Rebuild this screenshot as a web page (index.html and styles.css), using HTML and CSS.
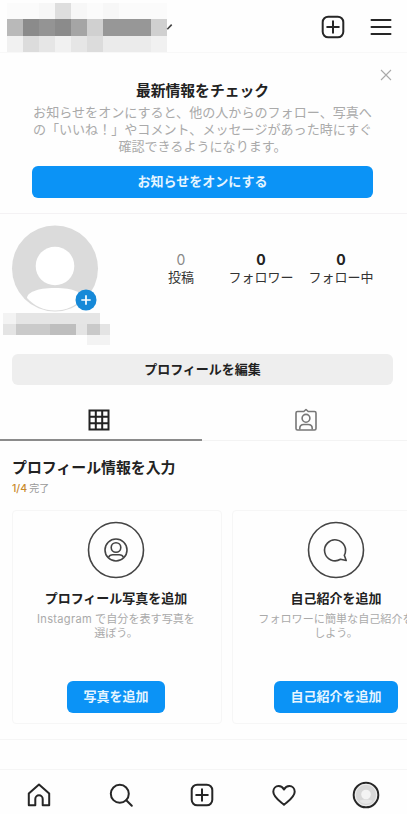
FILE: index.html
```
<!DOCTYPE html>
<html lang="ja">
<head>
<meta charset="utf-8">
<title>プロフィール</title>
<link rel="stylesheet" href="styles.css">
</head>
<body>
<div class="app">
  <header class="topbar">
    <svg class="account" width="180" height="52" viewBox="0 0 180 52">
      <g shape-rendering="crispEdges">
        <path fill="#f7f7f7" d="M39 3h16v16H39zM71 3h16v16H71zM103 3h16v16h-16z"/>
        <path fill="#fbfbfb" d="M7 3h32v16H7zM87 3h16v16H87zM119 3h48v16h-48z"/>
        <path fill="#dedede" d="M55 3h16v16H55z"/>
        <path fill="#b9b9b9" d="M7 19h16v17H7z"/>
        <path fill="#8b8b8b" d="M23 19h16v17H23zM55 19h16v17H55z"/>
        <path fill="#949494" d="M39 19h16v17H39z"/>
        <path fill="#a5a5a5" d="M71 19h16v17H71z"/>
        <path fill="#d0d0d0" d="M87 19h16v17H87zM151 19h16v17h-16z"/>
        <path fill="#979797" d="M103 19h48v17h-48z"/>
        <path fill="#f1f1f1" d="M7 36h16v16H7zM55 36h16v16H55zM151 36h16v16h-16z"/>
        <path fill="#dcdcdc" d="M23 36h16v16H23zM87 36h16v16H87z"/>
        <path fill="#e6e6e6" d="M39 36h16v16H39zM71 36h16v16H71z"/>
        <path fill="#ebebeb" d="M103 36h48v16h-48z"/>
      </g>
      <path d="M167.300 29.200l4.400-4.600" stroke="#444" stroke-width="1.600" fill="none"/>
    </svg>
    <div class="actions">
      <svg width="24" height="24" viewBox="0 0 24 24" class="line"><rect x="1.700" y="1.700" width="20.600" height="20.600" rx="5.500"/><path d="M12 6.200v11.600M6.200 12h11.600"/></svg>
      <svg width="22" height="24" viewBox="0 0 22 24" class="line"><path d="M1.500 5h19M1.500 12h19M1.500 19h19"/></svg>
    </div>
  </header>

  <section class="notice">
    <svg class="close" width="12" height="12" viewBox="0 0 12 12"><path d="M1 1l10 10M11 1L1 11" stroke="#aaa" stroke-width="1.100"/></svg>
    <h2>最新情報をチェック</h2>
    <p>お知らせをオンにすると、他の人からのフォロー、写真へ<br>の「いいね！」やコメント、メッセージがあった時にすぐ<br>確認できるようになります。</p>
    <button class="primary wide">お知らせをオンにする</button>
  </section>

  <section class="profile">
    <div class="person">
      <svg width="112" height="134" viewBox="0 0 112 134">
        <circle cx="55" cy="54.500" r="43" fill="#dbdbdb"/>
        <circle cx="55" cy="52" r="19.300" fill="#fff"/>
        <path d="M27 84c0-5 9-10 28-10s28 5 28 10c-7 8-17 12.500-28 12.500s-21-4.500-28-12.500z" fill="#fff"/>
        <circle cx="86" cy="86" r="10.500" fill="#1689d8"/>
        <path d="M86 81.300v9.400M81.300 86h9.400" stroke="#fff" stroke-width="1.700"/>
        <g shape-rendering="crispEdges">
          <path fill="#e5e5e5" d="M16 99h84v11H16z"/>
          <path fill="#f3f3f3" d="M3 99h13v11H3zM87 121h23v10H87z"/>
          <path fill="#e4e4e4" d="M3 110h13v11H3zM76 110h11v11H76zM100 110h10v11h-10z"/>
          <path fill="#cacaca" d="M16 110h34v11H16z"/>
          <path fill="#bebebe" d="M50 110h26v11H50z"/>
          <path fill="#c9c9c9" d="M87 110h13v11H87z"/>
        </g>
      </svg>
    </div>
    <dl class="stats">
      <div class="muted"><dd>0</dd><dt>投稿</dt></div>
      <div><dd>0</dd><dt>フォロワー</dt></div>
      <div><dd>0</dd><dt>フォロー中</dt></div>
    </dl>
  </section>

  <button class="edit">プロフィールを編集</button>

  <div class="tabs">
    <div class="tab active">
      <svg width="22" height="22" viewBox="0 0 22 22"><path d="M1.500 1.500h19v19h-19zM7.800 1.500v19M14.200 1.500v19M1.500 7.800h19M1.500 14.200h19" fill="none" stroke="#222" stroke-width="2"/></svg>
    </div>
    <div class="tab">
      <svg width="24" height="24" viewBox="0 0 24 24" fill="none" stroke="#777" stroke-width="1.600" stroke-linejoin="round"><path d="M3.500 3.500h6.300L12 1.500l2.200 2h6.300q1.500 0 1.500 1.500v15.500q0 1.500-1.500 1.500h-17Q2 22 2 20.500V5q0-1.500 1.500-1.500z"/><circle cx="12" cy="10.300" r="3.900"/><path d="M5.800 21.500v-1.200c0-2.500 1.800-3.800 4-3.800h4.400c2.200 0 4 1.300 4 3.800v1.200"/></svg>
    </div>
  </div>

  <section class="setup">
    <h2>プロフィール情報を入力</h2>
    <p class="progress"><b>1/4</b>完了</p>
    <div class="cards">
      <article class="card">
        <svg width="58" height="58" viewBox="0 0 58 58" class="badge"><circle cx="29" cy="29" r="27.500"/><circle cx="29" cy="29" r="11"/><circle cx="29" cy="26.500" r="4.800"/><path d="M21.500 36.500c.8-2 2.300-2.800 4.300-2.800h6.400c2 0 3.500.8 4.300 2.800"/></svg>
        <h3>プロフィール写真を追加</h3>
        <p><span class="latin">Instagram</span> で自分を表す写真を<br>選ぼう。</p>
        <button class="primary">写真を追加</button>
      </article>
      <article class="card">
        <svg width="58" height="58" viewBox="0 0 58 58" class="badge"><circle cx="29" cy="29" r="27.500"/><path d="M37.300 34.300A10.500 10.500 0 1 0 33.500 38.300l5.700 1.200z"/></svg>
        <h3>自己紹介を追加</h3>
        <p>フォロワーに簡単な自己紹介を<br>しよう。</p>
        <button class="primary">自己紹介を追加</button>
      </article>
    </div>
  </section>

  <nav class="bottom">
    <svg width="26" height="26" viewBox="0 0 26 26" class="line"><path d="M2.800 23.300V11.500L13 2.500l10.200 9v11.800h-6.500V17a3.700 3.700 0 0 0-7.400 0v6.300z"/></svg>
    <svg width="26" height="26" viewBox="0 0 26 26" class="line"><circle cx="11.800" cy="11.800" r="9"/><path d="M18.300 18.300l5.500 5.500"/></svg>
    <svg width="26" height="26" viewBox="0 0 26 26" class="line"><rect x="2.700" y="2.700" width="20.600" height="20.600" rx="5.500"/><path d="M13 7.200v11.600M7.200 13h11.600"/></svg>
    <svg width="26" height="26" viewBox="0 0 26 26" class="line"><path d="M13 22.800C9.500 19.500 2.300 15.200 2.300 9.700c0-3.300 2.400-5.700 5.300-5.700 2.500 0 4.200 1.300 5.400 3.500C14.200 5.300 15.900 4 18.400 4c2.900 0 5.300 2.400 5.300 5.700 0 5.500-7.200 9.800-10.700 13.100z"/></svg>
    <svg width="28" height="28" viewBox="0 0 28 28"><circle cx="14" cy="14" r="12.300" fill="#d8d8d8" stroke="#262626" stroke-width="2"/><circle cx="14" cy="14" r="10.700" fill="none" stroke="#eee"/><circle cx="14" cy="13.500" r="4.800" fill="#f4f4f4"/><path d="M7.500 20c2-2 11-2 13 0-3 3.500-10 3.500-13 0z" fill="#e6e6e6"/></svg>
  </nav>
</div>
</body>
</html>
```
FILE: styles.css
```
* { box-sizing: border-box; margin: 0; padding: 0; }

body {
  width: 407px;
  height: 814px;
  overflow: hidden;
  background: #fefefe;
  color: #222;
  font-family: "Liberation Sans", "Noto Sans CJK JP", sans-serif;
}

svg { display: block; flex: none; }
button { border: 0; font: inherit; color: inherit; white-space: nowrap; }

.app { display: flex; flex-direction: column; width: 407px; height: 814px; overflow: hidden; }

.line { fill: none; stroke: #262626; stroke-width: 2; stroke-linecap: round; stroke-linejoin: round; }

.topbar {
  display: flex;
  justify-content: space-between;
  height: 53px;
  padding-right: 15px;
  border-bottom: 1px solid #f8f8f8;
}
.actions { display: flex; gap: 25px; padding-top: 15px; }

.notice {
  position: relative;
  height: 161px;
  padding: 27px 32px 0;
  border-bottom: 1px solid #f4f2f4;
  text-align: center;
}
.close { position: absolute; top: 16px; right: 15px; }
.notice h2 { font-size: 14.8px; line-height: 22px; margin-right: 2px; }
.notice p {
  margin: 2px -10px 0 -12px;
  color: #aaa;
  font-size: 13.07px;
  line-height: 17px;
  white-space: nowrap;
}

.primary {
  height: 32px;
  border-radius: 6px;
  background: #0b93f6;
  color: #e6f5ff;
  font-size: 13px;
  font-weight: 700;
  line-height: 32px;
}
.wide { display: block; width: 341px; margin-top: 11px; }

.profile { display: flex; height: 140px; }
.stats { display: flex; padding-top: 37px; margin-left: 29px; }
.stats div { width: 80px; text-align: center; }
.stats dd { font-family: Inter, sans-serif; font-size: 14px; font-weight: 700; line-height: 18px; }
.stats dt { font-size: 13px; line-height: 18px; white-space: nowrap; color: #333; }
.stats .muted dd { font-weight: 400; color: #888; }

.edit {
  width: 381px;
  height: 31px;
  margin-left: 12px;
  border-radius: 6px;
  background: #eee;
  font-size: 13px;
  font-weight: 700;
  line-height: 31px;
}

.tabs { display: flex; height: 57px; }
.tab {
  display: flex;
  justify-content: center;
  width: 205px;
  padding: 23px 0 0 2px;
  border-bottom: 1px solid #f3f3f3;
}
.tab.active { width: 202px; padding: 24px 4px 0 0; border-bottom: 2px solid #8b8b8b; }

.setup { height: 299px; padding: 15px 0 0 12px; border-bottom: 1px solid #f5f5f5; }
.setup h2 { font-size: 14.9px; line-height: 24px; }
.progress { padding-top: 1px; color: #999; font-size: 10px; line-height: 16px; }
.progress b { margin-right: 2px; color: #c98a2b; font-family: Inter, sans-serif; font-size: 10.5px; font-weight: 500; }

.cards { display: flex; gap: 10px; margin-top: 13px; }
.card {
  display: flex;
  flex: none;
  flex-direction: column;
  align-items: center;
  width: 210px;
  height: 214px;
  padding: 10px 2px 10px 0;
  border: 1px solid #f6f6f6;
  border-radius: 4px;
}
.badge { fill: none; stroke: #444; stroke-width: 1.6; stroke-linejoin: round; }
.card h3 { margin-top: 10px; font-size: 13px; line-height: 20px; white-space: nowrap; }
.card p {
  margin-top: 3px;
  color: #aaa;
  font-family: Inter, "Noto Sans CJK JP", sans-serif;
  font-size: 11.1px;
  line-height: 14px;
  text-align: center;
  white-space: nowrap;
}
.latin { letter-spacing: 0.3px; }
.card .primary { margin-top: auto; padding: 0 16px; }

.bottom {
  display: flex;
  justify-content: space-between;
  align-items: center;
  height: 45px;
  margin-top: 29px;
  padding: 5px 27px 0 26px;
  border-top: 1px solid #f5f5f5;
}
```
